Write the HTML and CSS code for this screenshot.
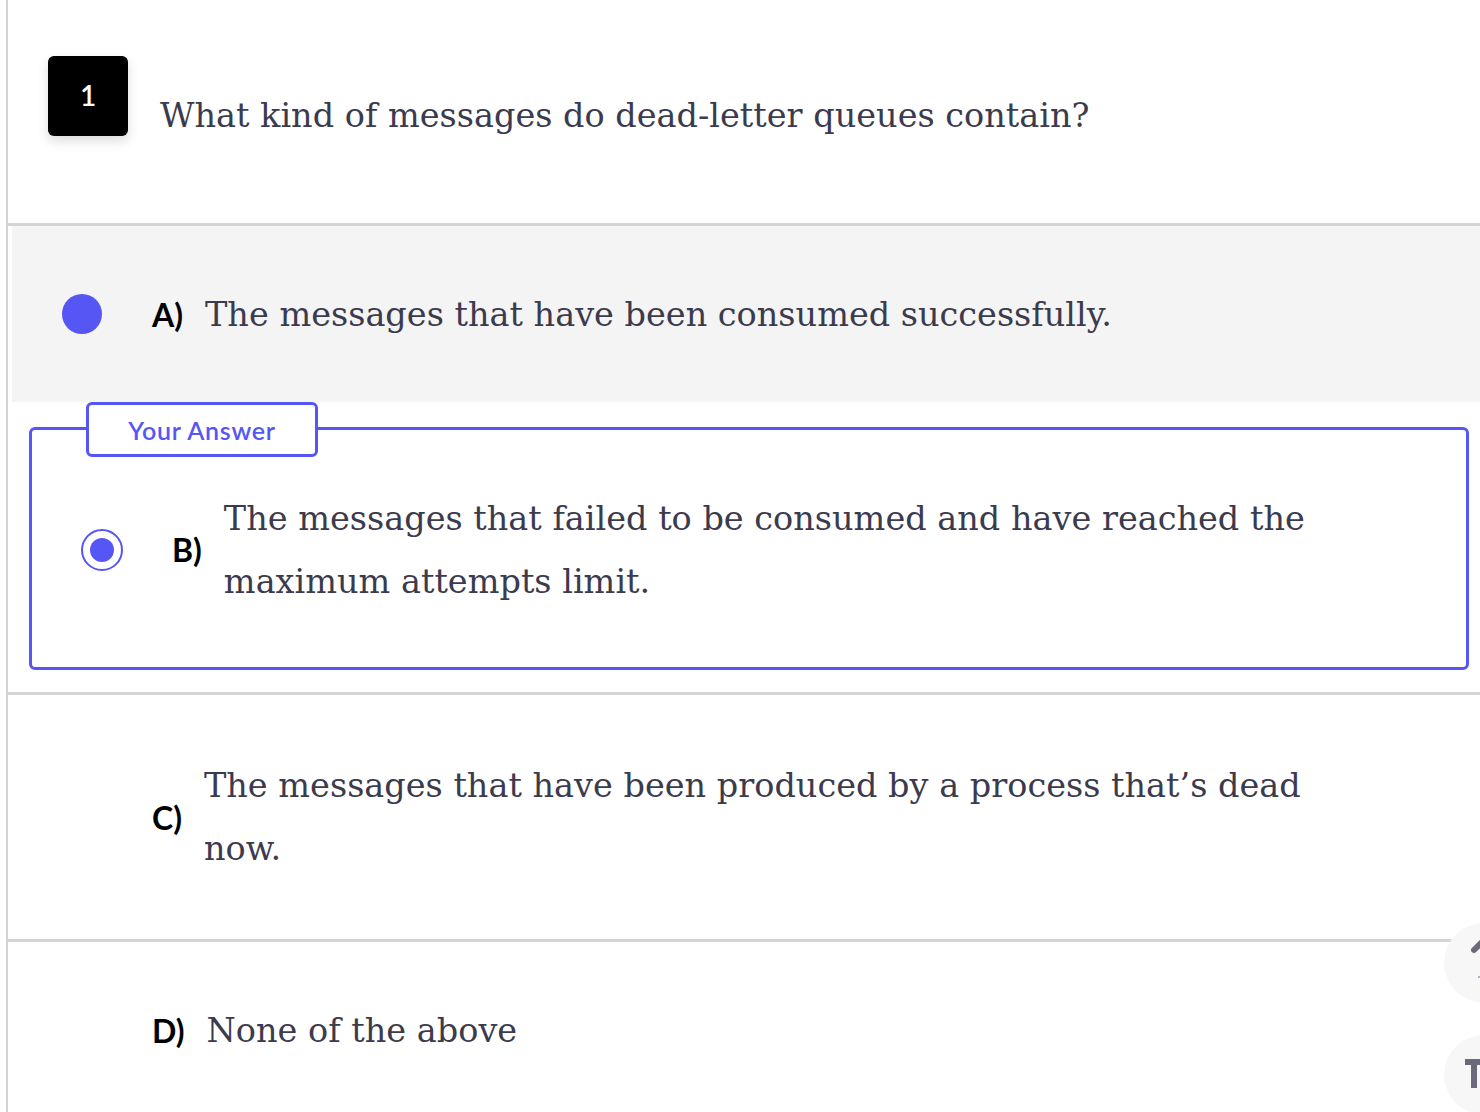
FILE: index.html
```html
<!DOCTYPE html>
<html lang="en">
<head>
<meta charset="utf-8">
<title>Quiz question</title>
<link rel="stylesheet" href="styles.css">
</head>
<body>
<div class="quiz">
  <div class="question">
    <div class="qnum">1</div>
    <div class="qtext">What kind of messages do dead-letter queues contain?</div>
  </div>

  <div class="option option-a">
    <div class="option-body option-hover">
      <span class="radio radio-filled"></span>
      <span class="label">A)</span>
      <span class="text">The messages that have been consumed successfully.</span>
    </div>
  </div>

  <div class="option-selected">
    <div class="answer-box">
      <div class="answer-tag">Your Answer</div>
      <span class="radio-checked"><span class="radio-dot"></span></span>
      <span class="label label-b">B)</span>
      <span class="text">The messages that failed to be consumed and have reached the maximum attempts limit.</span>
    </div>
  </div>

  <div class="option">
    <div class="option-body option-tall">
      <span class="radio radio-empty"></span>
      <span class="label">C)</span>
      <span class="text">The messages that have been produced by a process that’s dead now.</span>
    </div>
  </div>

  <div class="option">
    <div class="option-body">
      <span class="radio radio-empty"></span>
      <span class="label">D)</span>
      <span class="text">None of the above</span>
    </div>
  </div>
</div>

<div class="fab fab-edit">
  <svg width="80" height="80" viewBox="0 0 80 80">
    <line x1="30" y1="27" x2="38" y2="19" stroke="#6b6a7a" stroke-width="6" stroke-linecap="round"/>
    <circle cx="35" cy="54" r="1" fill="#9a9aa6"/>
  </svg>
</div>
<div class="fab fab-text">
  <svg width="80" height="80" viewBox="0 0 80 80">
    <rect x="21" y="24" width="22" height="6" fill="#6b6a7a"/>
    <rect x="27" y="24" width="6" height="29" fill="#6b6a7a"/>
  </svg>
</div>
</body>
</html>
```

FILE: styles.css
```css
html, body {
  margin: 0;
  padding: 0;
  background: #ffffff;
}

body {
  width: 1480px;
  height: 1112px;
  overflow: hidden;
  position: relative;
}

.quiz {
  margin-left: 6px;
  border-left: 2px solid #d3d3d8;
  min-height: 1112px;
}

.question {
  box-sizing: border-box;
  height: 223px;
  display: flex;
  align-items: flex-start;
  padding: 56px 0 0 40px;
}

.qnum {
  flex: none;
  width: 80px;
  height: 80px;
  border-radius: 6px;
  background: #000000;
  color: #ffffff;
  font-family: Lato, "Open Sans", sans-serif;
  font-weight: 600;
  font-size: 28px;
  display: flex;
  align-items: center;
  justify-content: center;
  box-shadow: 0 5px 12px rgba(0, 0, 0, 0.14);
  padding-bottom: 2px;
  box-sizing: border-box;
}

.qtext,
.text {
  font-family: "DejaVu Serif", "Liberation Serif", serif;
  font-size: 33.5px;
  line-height: 63px;
  color: #3c3b4e;
}

.qtext {
  margin-left: 32px;
  margin-top: 28px;
}

.option {
  border-top: 3px solid #d3d3d8;
  padding-left: 4px;
}

.option-body {
  box-sizing: border-box;
  height: 176px;
  display: flex;
  align-items: center;
  padding-left: 50px;
}

.option-hover {
  background: #f4f4f4;
}

.option-tall {
  height: 244px;
}

.radio {
  flex: none;
  width: 40px;
  height: 40px;
  border-radius: 50%;
}

.radio-filled {
  background: #5556f4;
}

.radio-empty {
  visibility: hidden;
}

.label {
  flex: none;
  margin-left: 50px;
  font-family: Lato, "Open Sans", sans-serif;
  font-weight: 700;
  font-size: 32px;
  color: #000000;
}

.label-b {
  margin-left: 49px;
}

.text {
  margin-left: 22px;
  max-width: 1120px;
}

.option-selected {
  padding: 25px 11px 22px 21px;
}

.answer-box {
  position: relative;
  box-sizing: border-box;
  height: 243px;
  border: 3px solid #5556f4;
  border-radius: 6px;
  display: flex;
  align-items: center;
  padding-left: 49px;
  padding-top: 2px;
}

.answer-tag {
  position: absolute;
  top: -28px;
  left: 54px;
  box-sizing: border-box;
  width: 232px;
  height: 55px;
  border: 3px solid #5556f4;
  border-radius: 6px;
  background: #ffffff;
  display: flex;
  align-items: center;
  justify-content: center;
  font-family: Lato, "Open Sans", sans-serif;
  font-weight: 600;
  font-size: 25px;
  letter-spacing: 0.7px;
  color: #5556f4;
}

.radio-checked {
  flex: none;
  box-sizing: border-box;
  width: 42px;
  height: 42px;
  border-radius: 50%;
  border: 2px solid #5556f4;
  display: flex;
  align-items: center;
  justify-content: center;
}

.radio-dot {
  width: 24px;
  height: 24px;
  border-radius: 50%;
  background: #5556f4;
}

.fab {
  position: absolute;
  left: 1444px;
  width: 80px;
  height: 80px;
  border-radius: 50%;
  background: #f7f7f8;
}

.fab svg {
  display: block;
}

.fab-edit {
  top: 923px;
}

.fab-text {
  top: 1035px;
}
```
